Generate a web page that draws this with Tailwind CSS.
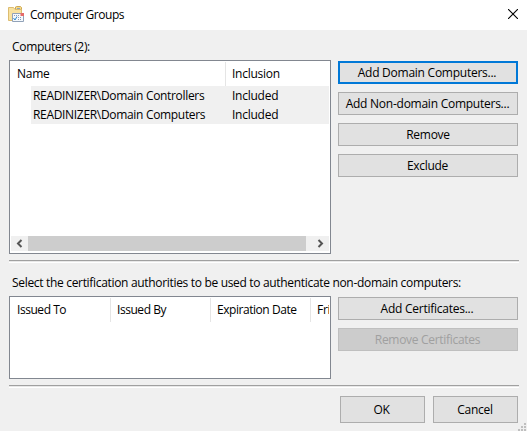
<!DOCTYPE html>
<html lang="en"><head><meta charset="utf-8"><title>Computer Groups</title>
<script src="https://cdn.jsdelivr.net/npm/@tailwindcss/browser@4"></script></head>
<body class="relative h-[431px] w-[527px] overflow-hidden bg-[#f0f0f0] font-['Open_Sans','Noto_Sans',sans-serif] text-[12px] leading-[18px] whitespace-nowrap text-black">
<header class="flex h-[30px] items-center bg-white pl-[8px] pr-[9px]">
  <svg class="-mt-[2px] h-[16px] w-[16px] shrink-0" viewBox="0 0 16 16">
    <path d="M7.500 4V1L8.500 .5h4L13.500 1.500V4z" fill="#f3d98c" stroke="#cfa850"/>
    <path d="M.5 14.500V1.500h5l1.500 2h6.500v11z" fill="#f8e2a0" stroke="#dcbc70"/>
    <path d="M9 2.500h3" stroke="#8fa5b8"/>
    <path d="M4.500 7.500h11v8h-11z" fill="#f5f9fd" stroke="#91a2b8"/>
    <path d="M12.500 7H16v3h-3.500z" fill="#e66b68"/>
    <path d="M6 9.500h1m1 0h1m1 0h1m-1 2h1m1 0h1m-3 2h1m1 0h1" stroke="#8b9bb3"/>
    <path d="M5.500 12l1.500 2 2-3.500" fill="none" stroke="#2d8bd0"/>
  </svg>
  <h1 class="ml-[6px] tracking-[-0.45px]">Computer Groups</h1>
  <svg class="ml-auto -mt-[2px] h-[10px] w-[10px]" viewBox="0 0 10 10"><path d="M0 0l10 10M10 0L0 10" stroke="#000" stroke-width="1.100"/></svg>
</header>
<main class="pl-[9px] pr-[9px]">
  <div class="h-[30px] pt-[8px] pl-[3px] tracking-[-0.32px]">Computers (2):</div>
  <section class="flex justify-between">
    <div class="flex h-[194px] w-[322px] flex-col border border-[#828790] bg-white p-px">
      <div class="flex h-[24px] items-center">
        <span class="w-[214px] pl-[6px] tracking-[-0.25px]">Name</span><span class="h-full w-px bg-[#e5e5e5]"></span><span class="pl-[6px] tracking-[-0.25px]">Inclusion</span>
      </div>
      <div class="ml-[20px] flex h-[19px] items-center bg-[#f0f0f0] pt-px"><span class="w-[201px] pl-[2px] tracking-[-0.32px]">READINIZER\Domain Controllers</span><span class="tracking-[-0.25px]">Included</span></div>
      <div class="ml-[20px] flex h-[19px] items-center bg-[#f0f0f0] pt-px"><span class="w-[201px] pl-[2px] tracking-[-0.32px]">READINIZER\Domain Computers</span><span class="tracking-[-0.25px]">Included</span></div>
      <div class="mt-auto mb-[1px] flex h-[15px] justify-between bg-[#f0f0f0]">
        <svg class="h-[15px] w-[17px]" viewBox="0 0 17 15"><path d="M10.500 4L7 7.500l3.500 3.500" fill="none" stroke="#555" stroke-width="2"/></svg>
        <div class="w-[278px] bg-[#cdcdcd]"></div>
        <svg class="h-[15px] w-[23px]" viewBox="0 0 23 15"><path d="M12.500 4L16 7.500 12.500 11" fill="none" stroke="#555" stroke-width="2"/></svg>
      </div>
    </div>
    <div class="flex w-[180px] flex-col gap-[8px] pt-px">
      <button class="h-[23px] border-2 border-[#0078d7] bg-[#e1e1e1] pr-[2px] leading-[19px] tracking-[-0.25px]">Add Domain Computers...</button>
      <button class="h-[23px] border border-[#adadad] bg-[#e1e1e1] pr-[1px] leading-[21px] tracking-[-0.25px]">Add Non-domain Computers...</button>
      <button class="h-[23px] border border-[#adadad] bg-[#e1e1e1] leading-[21px] tracking-[-0.25px]">Remove</button>
      <button class="h-[23px] border border-[#adadad] bg-[#e1e1e1] pr-[1px] leading-[21px] tracking-[-0.3px]">Exclude</button>
    </div>
  </section>
  <div class="mt-[6px] -mr-px h-[3px] border-t border-b border-t-[#a0a0a0] border-b-white bg-[#e8e8e8]"></div>
  <div class="h-[33px] pt-[11px] pl-[3px] tracking-[-0.32px]">Select the certification authorities to be used to authenticate non-domain computers:</div>
  <section class="flex justify-between">
    <div class="h-[83px] w-[322px] overflow-hidden border border-[#828790] bg-white p-px">
      <div class="flex h-[24px] items-center overflow-hidden">
        <span class="w-[99px] shrink-0 pl-[6px] tracking-[-0.45px]">Issued To</span><span class="h-full w-px shrink-0 bg-[#e5e5e5]"></span>
        <span class="w-[99px] shrink-0 pl-[6px] tracking-[-0.45px]">Issued By</span><span class="h-full w-px shrink-0 bg-[#e5e5e5]"></span>
        <span class="w-[99px] shrink-0 pl-[6px] tracking-[-0.45px]">Expiration Date</span><span class="h-full w-px shrink-0 bg-[#e5e5e5]"></span>
        <span class="pl-[6px] tracking-[-0.25px]">Fri</span>
      </div>
    </div>
    <div class="flex w-[180px] flex-col gap-[8px] pt-px">
      <button class="h-[23px] border border-[#adadad] bg-[#e1e1e1] pr-[2px] leading-[21px] tracking-[-0.25px]">Add Certificates...</button>
      <button class="h-[23px] border border-[#bfbfbf] bg-[#cccccc] pr-[1px] leading-[21px] tracking-[-0.3px] text-[#a0a0a0]" disabled>Remove Certificates</button>
    </div>
  </section>
  <div class="mt-[6px] -mr-px h-[3px] border-t border-b border-t-[#a0a0a0] border-b-white bg-[#e8e8e8]"></div>
  <footer class="mt-[8px] flex justify-end gap-[8px]">
    <button class="h-[27px] w-[85px] border border-[#adadad] bg-[#e1e1e1] pr-[2px] leading-[25px] tracking-[-0.25px]">OK</button>
    <button class="h-[27px] w-[85px] border border-[#adadad] bg-[#e1e1e1] pr-[1px] leading-[25px] tracking-[-0.25px]">Cancel</button>
  </footer>
</main>
<svg class="absolute right-0 bottom-0 h-[8px] w-[9px]" viewBox="0 0 9 8" fill="#bfbfbf"><path d="M6 0h2v2H6zM3 3h2v2H3zM6 3h2v2H6zM0 6h2v2H0zM3 6h2v2H3zM6 6h2v2H6z"/></svg>
</body></html>
